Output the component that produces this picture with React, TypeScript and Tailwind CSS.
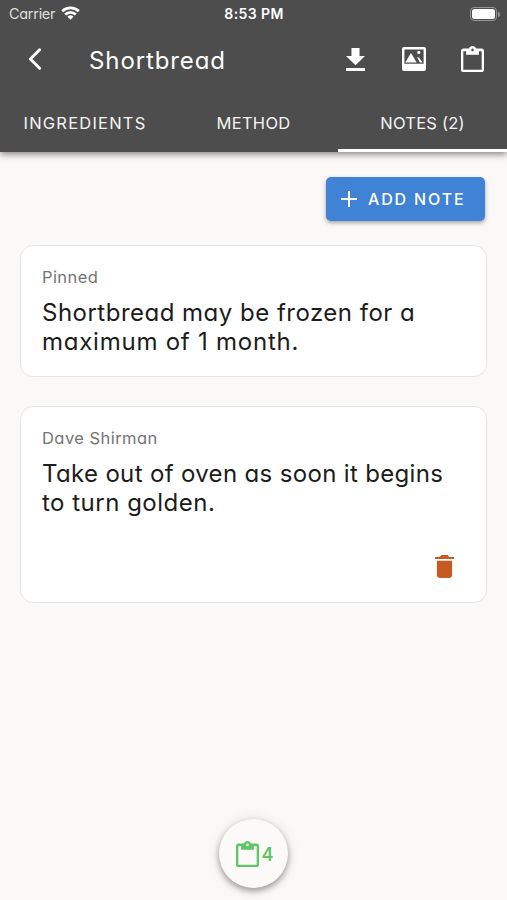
import type { ReactNode } from "react";

type Note = {
  author: string;
  lines: { text: string; className: string }[];
  authorClassName: string;
  removable?: boolean;
};

const notes: Note[] = [
  {
    author: "Pinned",
    authorClassName: "tracking-[0.4px]",
    lines: [
      { text: "Shortbread may be frozen for a", className: "tracking-[0.49px]" },
      { text: "maximum of 1 month.", className: "tracking-[0.76px]" },
    ],
  },
  {
    author: "Dave Shirman",
    authorClassName: "tracking-[0.45px]",
    lines: [
      { text: "Take out of oven as soon it begins", className: "tracking-[0.34px]" },
      { text: "to turn golden.", className: "tracking-[0.5px]" },
    ],
    removable: true,
  },
];

function ClipboardIcon({ className }: { className?: string }) {
  return (
    <svg viewBox="3 1 18 20" preserveAspectRatio="none" fill="currentColor" className={className}>
      <path d="M19 3h-4.18C14.4 1.84 13.3 1 12 1s-2.4.84-2.82 2H5a2 2 0 0 0-2 2v14a2 2 0 0 0 2 2h14a2 2 0 0 0 2-2V5a2 2 0 0 0-2-2m-7 0a1 1 0 1 1 0 2 1 1 0 0 1 0-2M7 7.7h10V5h2.2v14.2H4.8V5H7z" />
    </svg>
  );
}

function StatusBar() {
  return (
    <div className="flex h-7 items-center pl-[9px] pr-[7px]">
      <div className="flex flex-1 items-center gap-[6px]">
        <span className="text-[14.5px] leading-none tracking-[-0.3px] text-[#dedede]">Carrier</span>
        <svg viewBox="0 0 19 14" className="mb-[2px] h-[14px] w-[19px]" fill="none" stroke="#fff" strokeWidth="2.8">
          <path d="M1.2 5.2a12 12 0 0 1 16.6 0" />
          <path d="M4.2 8.5a7.6 7.6 0 0 1 10.6 0" />
          <path d="M9.5 13.8 6.5 10.8a4.3 4.3 0 0 1 6 0z" fill="#fff" stroke="none" />
        </svg>
      </div>
      <span className="mr-px text-[14px] font-semibold leading-none tracking-[0.4px]">8:53 PM</span>
      <div className="flex flex-1 items-center justify-end gap-px">
        <div className="h-[14px] w-[27px] rounded-[4px] border border-[#959595] p-px">
          <div className="h-full rounded-[2.5px] bg-white" />
        </div>
        <div className="h-[5px] w-[2px] rounded-r-full bg-[#959595]" />
      </div>
    </div>
  );
}

function Toolbar() {
  return (
    <div className="flex h-[66px] items-center pl-[28px] pr-[23px]">
      <svg viewBox="0 0 14 22" className="mb-[4px] h-[22px] w-[14px]" fill="none" stroke="#fff" strokeWidth="3">
        <path d="M11.6 1.8 2.4 11l9.2 9.2" strokeLinecap="round" strokeLinejoin="round" />
      </svg>
      <h1 className="ml-[47px] flex-1 text-[24px] leading-none tracking-[0.9px]">Shortbread</h1>
      <svg viewBox="96 64 320 392" preserveAspectRatio="none" fill="currentColor" className="mr-[37px] mb-[3px] h-[23px] w-[19px]">
        <path d="M188 64h136v136h92L256 359 96 200h92zM96 404h320v50H96z" />
      </svg>
      <svg viewBox="0 0 24 24" className="mr-[35px] mb-[4px] h-[24px] w-[24px]">
        <path
          fill="#fff"
          fillRule="evenodd"
          d="M2 0h20a2 2 0 0 1 2 2v20a2 2 0 0 1-2 2H2a2 2 0 0 1-2-2V2a2 2 0 0 1 2-2m.4 2.6v14.2h19.2V2.6z"
        />
        <path fill="#fff" d="M3.2 15.4 9 6l5.7 9.4zM15 10l2.2.8 3.4 4.6h-2.8zM16.8 3.8a1.6 1.6 0 1 1 0 3.2 1.6 1.6 0 0 1 0-3.2" />
      </svg>
      <ClipboardIcon className="mb-[4px] h-[26px] w-[23px]" />
    </div>
  );
}

function Tab({ children, active }: { children: ReactNode; active?: boolean }) {
  return (
    <div
      className={`flex items-center justify-center border-b-[3px] pt-[3px] text-[16.5px] ${
        active ? "border-white" : "border-transparent"
      }`}
    >
      {children}
    </div>
  );
}

function NoteCard({ author, authorClassName, lines, removable }: Note) {
  return (
    <article
      className={`rounded-[13px] border border-[#e5e5e4] bg-white px-[21px] pt-5 ${
        removable ? "h-[197px]" : "h-[132px]"
      }`}
    >
      <p className={`text-[16.5px] leading-[22px] text-[#747474] ${authorClassName}`}>{author}</p>
      <div className="mt-[10px] text-[24px] leading-[29px] text-[#1c1c1c]">
        {lines.map((line) => (
          <p key={line.text} className={`whitespace-nowrap ${line.className}`}>
            {line.text}
          </p>
        ))}
      </div>
      {removable && (
        <div className="mt-[38px] flex justify-end pr-[11px]">
          <svg viewBox="96 64 320 384" fill="#c65a22" className="h-[23px] w-[19px]">
            <path d="M128 405.4c0 23.4 19.2 42.6 42.7 42.6h170.6c23.5 0 42.7-19.2 42.7-42.6V160H128zM416 96h-80l-27-32H203l-27 32H96v32h320z" />
          </svg>
        </div>
      )}
    </article>
  );
}

export default function App() {
  return (
    <div className="flex h-[900px] w-[507px] flex-col overflow-hidden bg-[#faf9f7] font-['Inter',sans-serif] [font-feature-settings:'cv11'_1]">
      <header className="h-[152px] shrink-0 bg-[#4d4d4d] text-white shadow-[0_2px_7px_rgba(0,0,0,0.5)]">
        <StatusBar />
        <Toolbar />
        <nav className="grid h-[58px] grid-cols-3 text-[#f4f4f4]">
          <Tab>
            <span className="-mr-px tracking-[1.2px]">INGREDIENTS</span>
          </Tab>
          <Tab>
            <span className="tracking-[0.3px]">METHOD</span>
          </Tab>
          <Tab active>
            <span className="tracking-[0.2px]">NOTES (2)</span>
          </Tab>
        </nav>
      </header>

      <main className="flex flex-1 flex-col px-5 pt-[25px]">
        <button className="mr-[2px] flex h-[44px] w-[159px] items-center self-end rounded-[5px] bg-[#3f82d6] pl-[15px] text-white shadow-[0_2px_4px_rgba(0,0,0,0.35)]">
          <svg viewBox="0 0 16 16" className="h-4 w-4" stroke="currentColor" strokeWidth="2">
            <path d="M8 0v16M0 8h16" />
          </svg>
          <span className="ml-[11px] whitespace-nowrap text-[16px] font-medium tracking-[1.85px]">ADD NOTE</span>
        </button>
        <div className="mt-6 flex flex-col gap-[29px]">
          {notes.map((note) => (
            <NoteCard key={note.author} {...note} />
          ))}
        </div>
      </main>

      <footer className="flex justify-center pb-[12px]">
        <button className="flex h-[69px] w-[69px] items-center justify-center gap-[3px] rounded-full bg-[#fbfaf8] pl-[2px] text-[#5fc663] shadow-[0_3px_6px_rgba(0,0,0,0.35),0_1px_14px_rgba(0,0,0,0.1)]">
          <ClipboardIcon className="h-[26px] w-[23px]" />
          <span className="pt-[2px] text-[18px] font-semibold leading-none">4</span>
        </button>
      </footer>
    </div>
  );
}
